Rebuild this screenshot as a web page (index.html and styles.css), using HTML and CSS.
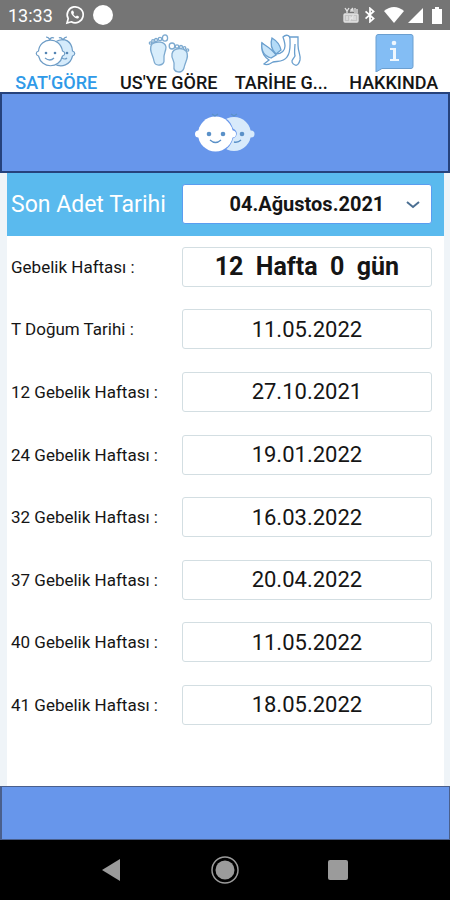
FILE: index.html
```
<!DOCTYPE html>
<html lang="tr">
<head>
    <meta charset="UTF-8">
    <meta name="viewport" content="width=device-width, initial-scale=1.0">
    <title>Gebelik Haftası Hesaplama</title>
    <link rel="stylesheet" href="styles.css">
</head>
<body>

<header class="status-bar">
    <span class="time">13:33</span>
    <svg class="whatsapp" width="20" height="20" viewBox="0 0 20 20" fill="none" stroke="#fff">
        <path d="M2 18l1.200-4.300A8 8 0 1 1 6.300 16.800z" stroke-width="1.700"/>
        <path d="M7 5.500c-1.500 1-1.200 3 .8 5.300s4.200 3.500 5.800 2.200l.6-1.300-2.200-1.100-1.100 1c-1.200-.5-2.200-1.500-2.600-2.600l.8-1-.9-2.300z" fill="#fff" stroke="none"/>
    </svg>
    <span class="dot"></span>
    <div class="status-icons">
        <svg width="17" height="18" viewBox="0 0 17 18" fill="none" stroke="#e4e4e4" stroke-width="1.300">
            <path d="M2 2l2 3 2-3M4 5v2M8 6V4h2v2M8 4l2-2M12 2v5M14 3v4"/>
            <rect x="1" y="8" width="14" height="8" rx="1" fill="#c4c4c4"/>
            <path d="M4 10v4M7 10v4l3-4v4M12 10v4"/>
        </svg>
        <svg width="12" height="16" viewBox="0 0 12 18" fill="none" stroke="#fff" stroke-width="2">
            <path d="M1 5l9 8-4 3.500v-15L10 5l-9 8"/>
        </svg>
        <svg class="wifi" width="20" height="16" viewBox="0 0 20 16" fill="#fff">
            <path d="M0 4Q10-4 20 4L10 16z"/>
        </svg>
        <svg width="16" height="16" viewBox="0 0 16 16" fill="#fff">
            <path d="M15 1v15H0z"/>
        </svg>
        <svg class="battery" width="10" height="17" viewBox="0 0 10 17" fill="#fff">
            <path d="M3 0h4v2h3v15H0V2h3z"/>
        </svg>
    </div>
</header>

<nav class="tabs">
    <button class="tab active">
        <svg width="42" height="36" viewBox="0 0 42 36" fill="#fff" stroke="#6d9cc6" stroke-width="1.200">
            <path d="M20 8C30 2 37 8 37.500 17c3 1 3 4 0 5-2 9-11 12-18 8z" fill="#d5ebfb"/>
            <path d="M28 6c-1-2-3-3-4-2M28 6c1-2 2-3 4-3" fill="none"/>
            <path d="M3.500 17C5 3 25 2 27.500 17c3 1 3 4 0 5-3 13-21 13-24 0-3-1-3-4 0-5z"/>
            <path d="M15 6c-1-2-2-3-4-3M15 6c0-2 2-3 4-2M10 24q5 4 9 0M27 24q3 2 5 0" fill="none"/>
            <g fill="#5585b4" stroke="none">
                <circle cx="11" cy="19" r="1.300"/>
                <circle cx="20" cy="19" r="1.300"/>
                <circle cx="32" cy="19" r="1.300"/>
            </g>
        </svg>
        <span>SAT'GÖRE</span>
    </button>
    <button class="tab">
        <svg width="42" height="40" viewBox="0 0 42 40" fill="#d8edfb" stroke="#7daad0" stroke-width="1.300">
            <path d="M4 10c4-3 13-3 14 3 0 5-3 7-2 13 1 6-9 7-10 1C5 21 0 15 4 10z"/>
            <path d="M38 17c-4-4-13-3-14 3-1 5 3 6 2 12-1 7 8 8 10 2 1-6 6-12 2-17z"/>
            <g fill="#fff">
                <ellipse cx="17" cy="4" rx="2.600" ry="3.200"/>
                <circle cx="12" cy="5" r="1.700"/>
                <circle cx="8" cy="6" r="1.500"/>
                <circle cx="5" cy="7" r="1.300"/>
                <circle cx="2.500" cy="9" r="1.200"/>
                <ellipse cx="24" cy="12" rx="2.800" ry="3"/>
                <circle cx="29" cy="12.500" r="1.700"/>
                <circle cx="33" cy="13" r="1.500"/>
                <circle cx="36.500" cy="14" r="1.300"/>
                <circle cx="39.500" cy="16" r="1.200"/>
            </g>
        </svg>
        <span>US'YE GÖRE</span>
    </button>
    <button class="tab">
        <svg width="42" height="34" viewBox="0 0 42 34" fill="none" stroke="#6a9fce" stroke-width="1.300">
            <path d="M29 3h9v8c0 7 3 10 2 15-1 4-3 6-5 5-3-1-4-4-2-6l2-3c-1-4 0-9 0-12" fill="#fff"/>
            <path d="M23 3c3-3 7-2 7 2 0 7 1 13-3 18-3 5-9 4-14 5-3 2-6 4-9 2l5-4C3 22 1 16 2 9c4 4 6 6 11 8l3 3c6 0 9-4 9-8 0-3-1-6-2-9z" fill="#fff"/>
            <path d="M2 9c6 4 10 6 14 12l-5 3C4 22 1 16 2 9z" fill="#c9e5f9"/>
            <path d="M12 4c5 3 8 7 9 12l-5 4c-4-4-6-10-4-16z" fill="#b4dbf7"/>
        </svg>
        <span>TARİHE G...</span>
    </button>
    <button class="tab">
        <svg width="40" height="38" viewBox="0 0 40 38">
            <path d="M4 .5h33q2 0 2 2v30q0 2-2 2H8L2 38V3Q2 .5 4 .5z" fill="#83bdf4" stroke="#6b9fd0"/>
            <g fill="#eef7fe">
                <circle cx="20" cy="9" r="2.300"/>
                <path d="M16 14h6v11h3v2h-9v-2h3v-9h-3z"/>
            </g>
        </svg>
        <span>HAKKINDA</span>
    </button>
</nav>

<div class="banner">
    <svg width="62" height="40" viewBox="0 0 62 40">
        <g fill="#d8eafb">
            <circle cx="40" cy="21" r="17"/>
            <circle cx="57" cy="21" r="3.500"/>
        </g>
        <path d="M21.500 2.500c9 0 15 5 17.500 13 5 2 5 8 0 10-2 8-8 14-17.500 14z" fill="#6796eb"/>
        <g fill="#fff">
            <circle cx="21.500" cy="21" r="17.500"/>
            <circle cx="4.500" cy="21" r="3.500"/>
            <circle cx="38.500" cy="21" r="3.500"/>
        </g>
        <g fill="#5b91c8">
            <circle cx="15" cy="21" r="2.300"/>
            <circle cx="29" cy="21" r="2.300"/>
            <circle cx="48" cy="21" r="2.300"/>
        </g>
        <path d="M16 27q5.500 5 11 0M40 29q4 1 7-2M18 1l3 2 3-2M37 1l3 2 3-2" fill="none" stroke="#5b91c8" stroke-width="1.300"/>
    </svg>
</div>

<main class="content">
    <form class="panel">
        <div class="row date-row">
            <label for="sat">Son Adet Tarihi</label>
            <div class="select-box">
                <select id="sat">
                    <option>04.Ağustos.2021</option>
                </select>
                <svg class="chevron" width="14" height="8" viewBox="0 0 14 8" fill="none" stroke="#4b6f92" stroke-width="2">
                    <path d="M1 1l6 5 6-5"/>
                </svg>
            </div>
        </div>
        <div class="row">
            <label for="hafta">Gebelik Haftası :</label>
            <input class="week" id="hafta" type="text" value="12  Hafta  0  gün" readonly>
        </div>
        <div class="row">
            <label for="dogum">T Doğum Tarihi :</label>
            <input id="dogum" type="text" value="11.05.2022" readonly>
        </div>
        <div class="row">
            <label for="h12">12 Gebelik Haftası :</label>
            <input id="h12" type="text" value="27.10.2021" readonly>
        </div>
        <div class="row">
            <label for="h24">24 Gebelik Haftası :</label>
            <input id="h24" type="text" value="19.01.2022" readonly>
        </div>
        <div class="row">
            <label for="h32">32 Gebelik Haftası :</label>
            <input id="h32" type="text" value="16.03.2022" readonly>
        </div>
        <div class="row">
            <label for="h37">37 Gebelik Haftası :</label>
            <input id="h37" type="text" value="20.04.2022" readonly>
        </div>
        <div class="row">
            <label for="h40">40 Gebelik Haftası :</label>
            <input id="h40" type="text" value="11.05.2022" readonly>
        </div>
        <div class="row">
            <label for="h41">41 Gebelik Haftası :</label>
            <input id="h41" type="text" value="18.05.2022" readonly>
        </div>
    </form>
</main>

<footer class="bottom-bar"></footer>

<div class="nav-bar">
    <button aria-label="Geri">
        <svg width="30" height="30" viewBox="0 0 30 30" fill="#9b9b9b"><path d="M23 4v22L5 15z"/></svg>
    </button>
    <button aria-label="Ana ekran">
        <svg width="30" height="30" viewBox="0 0 30 30" fill="#9b9b9b">
            <circle cx="15" cy="15" r="13" fill="none" stroke="#9b9b9b" stroke-width="1.500"/>
            <circle cx="15" cy="15" r="9.500"/>
        </svg>
    </button>
    <button aria-label="Son uygulamalar">
        <svg width="30" height="30" viewBox="0 0 30 30" fill="#9b9b9b"><rect x="5" y="5" width="20" height="20" rx="2"/></svg>
    </button>
</div>

</body>
</html>
```
FILE: styles.css
```
* {
    box-sizing: border-box;
}
body {
    margin: 0;
    min-height: 100vh;
    display: flex;
    flex-direction: column;
    background: #eff4f8;
    font-family: Roboto, "Liberation Sans", sans-serif;
    color: #151515;
}
button, input, select {
    font-family: inherit;
    color: inherit;
}
svg {
    display: block;
}
.status-bar {
    display: flex;
    align-items: center;
    height: 30px;
    padding: 0 8px;
    background: #757575;
    color: #fff;
}
.time {
    font-size: 18px;
}
.whatsapp {
    margin-left: 12px;
}
.dot {
    width: 20px;
    height: 20px;
    margin-left: 8px;
    border-radius: 50%;
    background: #fff;
}
.status-icons {
    display: flex;
    align-items: center;
    gap: 4px;
    margin-left: auto;
}
.wifi {
    margin-left: 4px;
}
.battery {
    margin-left: 4px;
}
.tabs {
    display: grid;
    grid-template-columns: repeat(4, 1fr);
    height: 62px;
    background: #fff;
}
.tab {
    display: flex;
    flex-direction: column;
    align-items: center;
    justify-content: space-between;
    padding: 4px 0 0;
    border: none;
    border-bottom: 2px solid #fff;
    background: none;
    font-size: 18px;
    line-height: 18px;
    font-weight: 500;
    white-space: nowrap;
    cursor: pointer;
}
.tab.active {
    color: #2f9ae8;
    border-bottom-color: #2f9ae8;
}
.banner {
    display: flex;
    align-items: center;
    justify-content: center;
    height: 81px;
    border: 2px solid #26427c;
    background: #6796eb;
}
.content {
    flex: 1;
    display: flex;
    padding: 0 6px 0 7px;
}
.panel {
    flex: 1;
    display: flex;
    flex-direction: column;
    padding-bottom: 50px;
    background: #fff;
}
.row {
    flex: 1;
    display: grid;
    grid-template-columns: 2fr 3fr;
    column-gap: 4px;
    align-items: center;
    padding: 0 12px 0 4px;
}
.row label {
    font-size: 17px;
    white-space: nowrap;
}
.row input, .row select {
    display: block;
    width: 100%;
    height: 40px;
    padding: 0;
    border: 1px solid #d3dee2;
    border-radius: 3px;
    background: #fff;
    font-size: 22px;
    text-align: center;
}
.row .week {
    font-size: 25px;
    font-weight: 700;
    white-space: pre;
}
.date-row {
    background: #5abaee;
}
.row.date-row label {
    color: #fff;
    font-size: 23px;
}
.select-box {
    position: relative;
}
.row select {
    appearance: none;
    border-color: #5a9df0;
    font-size: 20px;
    font-weight: 700;
    text-align-last: center;
}
.chevron {
    position: absolute;
    top: 17px;
    right: 12px;
    pointer-events: none;
}
.bottom-bar {
    height: 54px;
    border: 1px solid #4a5f8c;
    border-left-width: 2px;
    background: #6796eb;
}
.nav-bar {
    display: flex;
    align-items: center;
    justify-content: center;
    gap: 83px;
    height: 60px;
    background: #000;
}
.nav-bar button {
    padding: 0;
    border: none;
    background: none;
    cursor: pointer;
}
```
